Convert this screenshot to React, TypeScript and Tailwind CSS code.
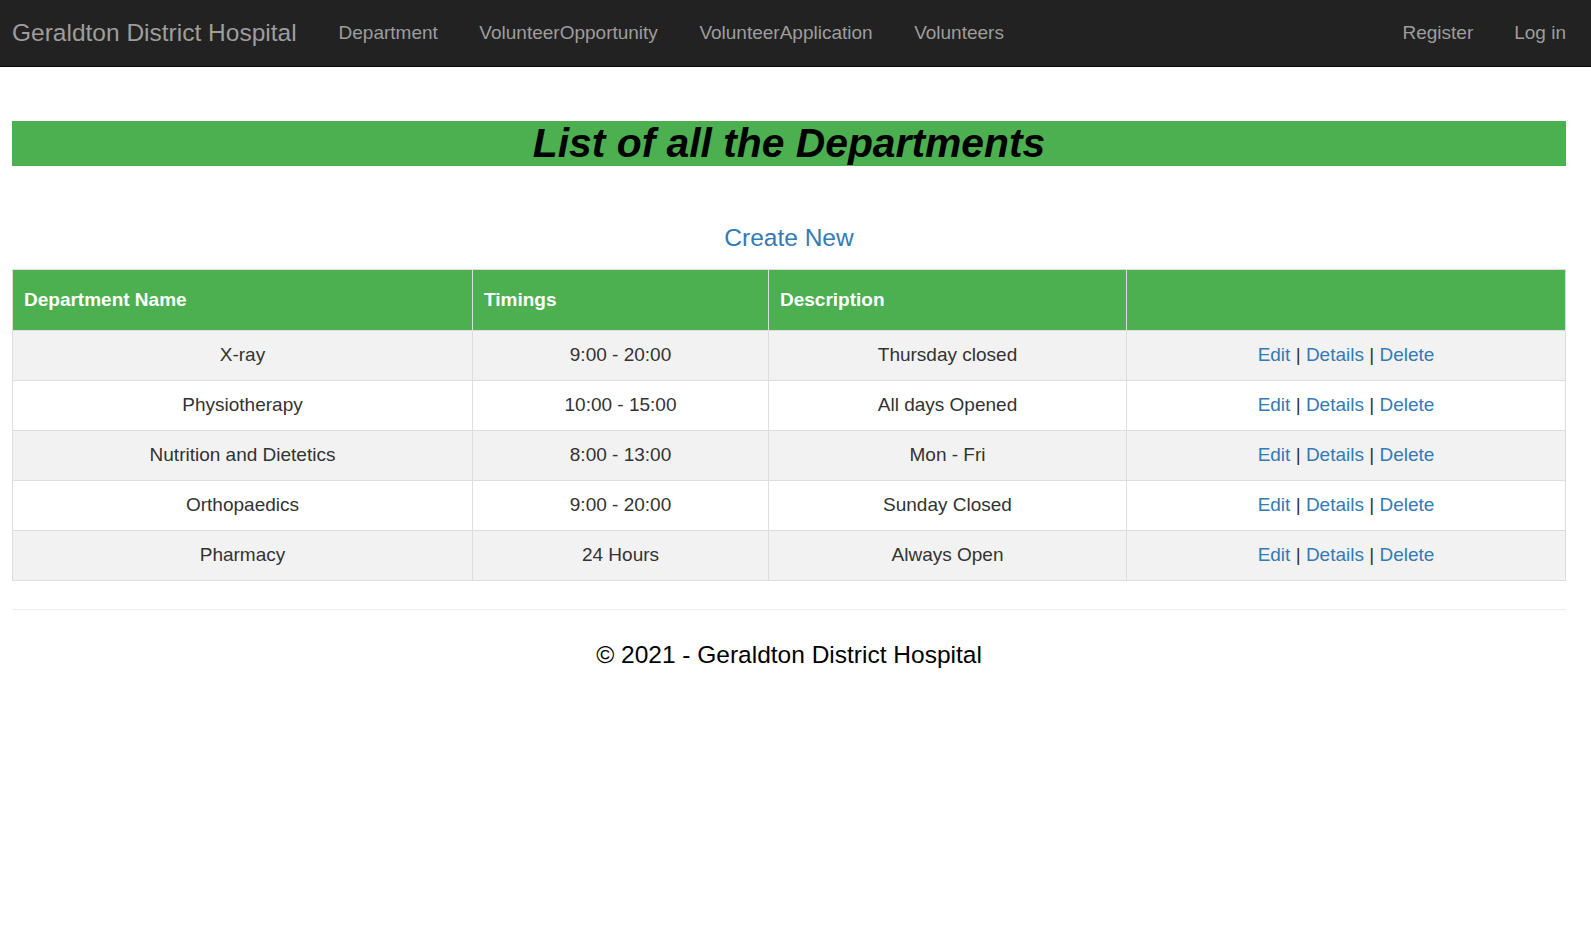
const departments = [
  { name: "X-ray", timings: "9:00 - 20:00", description: "Thursday closed" },
  { name: "Physiotherapy", timings: "10:00 - 15:00", description: "All days Opened" },
  { name: "Nutrition and Dietetics", timings: "8:00 - 13:00", description: "Mon - Fri" },
  { name: "Orthopaedics", timings: "9:00 - 20:00", description: "Sunday Closed" },
  { name: "Pharmacy", timings: "24 Hours", description: "Always Open" },
];

const navLinks = ["Department", "VolunteerOpportunity", "VolunteerApplication", "Volunteers"];

export default function App() {
  return (
    <div className="min-h-[934px] bg-white font-['Liberation_Sans',Arial,sans-serif] text-[#333]">
      <nav className="flex h-[67px] items-center border-b border-[#080808] bg-[#222] pt-[1px] pr-[25px] pl-[12px] text-[#9d9d9d]">
        <a className="text-[24.5px] leading-none">Geraldton District Hospital</a>
        <ul className="ml-[42px] flex gap-[41.5px] text-[19px]">
          {navLinks.map((l) => (
            <li key={l}>
              <a>{l}</a>
            </li>
          ))}
        </ul>
        <ul className="ml-auto flex gap-[41px] text-[19px]">
          <li>
            <a>Register</a>
          </li>
          <li>
            <a>Log in</a>
          </li>
        </ul>
      </nav>

      <main className="mx-[12px] w-[1554px]">
        <h2 className="mt-[54px] h-[45px] bg-[#4caf50] text-center text-[40.8px] leading-[45px] font-bold italic text-black">
          List of all the Departments
        </h2>

        <p className="mt-[58px] text-center text-[24.5px] leading-[27px]">
          <a className="text-[#337ab7]">Create New</a>
        </p>

        <table className="mt-[18px] w-full table-fixed border-collapse border border-[#ddd] text-[19px]">
          <colgroup>
            <col className="w-[460px]" />
            <col className="w-[296px]" />
            <col className="w-[358px]" />
            <col />
          </colgroup>
          <thead>
            <tr className="h-[61px] bg-[#4caf50] text-white">
              <th className="border border-[#ddd] px-[11px] text-left align-middle font-bold">Department Name</th>
              <th className="border border-[#ddd] px-[11px] text-left align-middle font-bold">Timings</th>
              <th className="border border-[#ddd] px-[11px] text-left align-middle font-bold">Description</th>
              <th className="border border-[#ddd] px-[11px]"></th>
            </tr>
          </thead>
          <tbody>
            {departments.map((d, i) => (
              <tr key={d.name} className={i % 2 === 0 ? "h-[50px] bg-[#f2f2f2]" : "h-[50px] bg-white"}>
                <td className="border border-[#ddd] px-[11px] text-center align-middle">{d.name}</td>
                <td className="border border-[#ddd] px-[11px] text-center align-middle">{d.timings}</td>
                <td className="border border-[#ddd] px-[11px] text-center align-middle">{d.description}</td>
                <td className="border border-[#ddd] px-[11px] text-center align-middle">
                  <a className="text-[#337ab7]">Edit</a> | <a className="text-[#337ab7]">Details</a> |{" "}
                  <a className="text-[#337ab7]">Delete</a>
                </td>
              </tr>
            ))}
          </tbody>
        </table>

        <hr className="mt-[28px] border-t border-[#eee]" />
        <footer>
          <p className="mt-[27px] text-center text-[24.5px] leading-[35px] text-black">
            © 2021 - Geraldton District Hospital
          </p>
        </footer>
      </main>
    </div>
  );
}
